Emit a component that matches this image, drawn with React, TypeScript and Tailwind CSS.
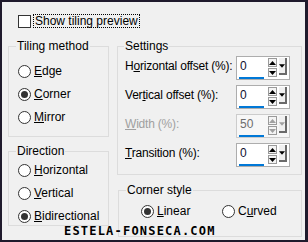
import type { ReactNode } from "react";

function Radio({ checked }: { checked?: boolean }) {
	return (
		<span className="flex h-[13px] w-[13px] shrink-0 items-center justify-center rounded-full border border-[#333333] bg-white">
			{checked && <span className="h-[7px] w-[7px] rounded-full bg-[#333333]" />}
		</span>
	);
}

function Choice({ checked, children }: { checked?: boolean; children: ReactNode }) {
	return (
		<div className="flex h-[23px] items-center gap-[3px]">
			<Radio checked={checked} />
			<span className="whitespace-nowrap">{children}</span>
		</div>
	);
}

function Arrow({ up, disabled }: { up?: boolean; disabled?: boolean }) {
	const c = disabled ? "#a0a0a0" : "#000000";
	return (
		<svg width="7" height="4" viewBox="0 0 7 4">
			{up ? <path d="M0 4 L3.5 0 L7 4 Z" fill={c} /> : <path d="M0 0 L7 0 L3.5 4 Z" fill={c} />}
		</svg>
	);
}

function Spin({ value, disabled }: { value: string; disabled?: boolean }) {
	return (
		<div
			className={`flex h-[24px] w-[54px] shrink-0 border ${
				disabled ? "border-[#cccccc] bg-[#f7f7f7]" : "border-[#adadad] bg-white"
			}`}
		>
			<div className="flex w-[30px] shrink-0 flex-col pl-[2px] pt-[1px]">
				<span className={`h-[17px] pl-[1px] leading-[17px] ${disabled ? "text-[#6d6d6d]" : "text-[#101030]"}`}>
					{value}
				</span>
				<span className="mt-[2px] h-[2px] w-[25px] bg-[#0078d7]" />
			</div>
			<div className="ml-[1px] flex shrink-0 flex-col gap-[1px] pt-[1px]">
				<span className="flex h-[9px] w-[9px] items-center justify-center border border-[#9a9a9a] bg-[#f4f4f4]">
					<Arrow up disabled={disabled} />
				</span>
				<span className="flex h-[9px] w-[9px] items-center justify-center border border-[#9a9a9a] bg-[#f4f4f4]">
					<Arrow disabled={disabled} />
				</span>
			</div>
			<div className="ml-[2px] mt-[1px] flex h-[17px] w-[8px] shrink-0 items-center justify-center border-b-2 border-r-2 border-[#d4d4d4] border-b-[#6a6a6a] border-r-[#6a6a6a] bg-[#f0f0f0]">
				<Arrow disabled={disabled} />
			</div>
		</div>
	);
}

function Row({ label, value, disabled }: { label: ReactNode; value: string; disabled?: boolean }) {
	return (
		<div className="flex h-[29px] items-start">
			<span
				className={`min-w-0 flex-1 whitespace-nowrap pt-[3px] leading-[15px] tracking-[-0.2px] ${
					disabled ? "text-[#a0a0a0]" : ""
				}`}
			>
				{label}
			</span>
			<Spin value={value} disabled={disabled} />
		</div>
	);
}

export default function App() {
	return (
		<div className="h-[242px] w-[308px] bg-[#1f1a2c] pb-[2px] pl-[2px] pr-[3px] pt-[2px]">
			<div className="relative h-full bg-[#f0f0f0] pl-[6px] pt-[12px] font-['Liberation_Sans',Arial,sans-serif] text-[12px] leading-[15px] text-black">
				{/* top checkbox */}
				<div className="flex h-[14px] items-center pl-[10px]">
					<span className="h-[13px] w-[13px] border border-[#333333] bg-white" />
					<span className="ml-[2px] flex h-[14px] items-center whitespace-nowrap border border-dotted border-black px-[1px]">
						Show tiling preview
					</span>
				</div>

				<div className="mt-[11px] flex">
					{/* left column */}
					<div className="flex w-[101px] flex-col">
						<fieldset className="h-[98px] min-w-0 border border-[#dcdcdc] pl-[9px] pt-[6px]">
							<legend className="-ml-[2px] px-[1px] leading-[15px]">Tiling method</legend>
							<Choice>
								<u>E</u>dge
							</Choice>
							<Choice checked>
								<u>C</u>orner
							</Choice>
							<Choice>
								<u>M</u>irror
							</Choice>
						</fieldset>
						<fieldset className="mt-[7px] h-[82px] min-w-0 border border-[#dcdcdc] pl-[9px]">
							<legend className="-ml-[2px] px-[1px] leading-[15px]">Direction</legend>
							<Choice>
								<u>H</u>orizontal
							</Choice>
							<Choice>
								<u>V</u>ertical
							</Choice>
							<Choice checked>
								<u>B</u>idirectional
							</Choice>
						</fieldset>
					</div>

					{/* right column */}
					<div className="ml-[8px] flex w-[185px] flex-col">
						<fieldset className="h-[136px] w-[185px] min-w-0 border border-[#dcdcdc] pl-[7px] pr-[11px] pt-[2px]">
							<legend className="-ml-[1px] px-[1px] leading-[15px]">Settings</legend>
							<Row
								label={
									<>
										H<u>o</u>rizontal offset (%):
									</>
								}
								value="0"
							/>
							<Row
								label={
									<>
										Ver<u>t</u>ical offset (%):
									</>
								}
								value="0"
							/>
							<Row
								label={
									<>
										<u>W</u>idth (%):
									</>
								}
								value="50"
								disabled
							/>
							<Row
								label={
									<>
										<u>T</u>ransition (%):
									</>
								}
								value="0"
							/>
						</fieldset>
						<fieldset className="ml-[1px] mt-[8px] h-[54px] w-[184px] min-w-0 border border-[#dcdcdc] pl-[8px] pt-[3px]">
							<legend className="-ml-[1px] px-[1px] leading-[15px]">Corner style</legend>
							<div className="flex pl-[14px]">
								<div className="flex h-[20px] w-[81px] items-center gap-[3px]">
									<Radio checked />
									<span>
										<u>L</u>inear
									</span>
								</div>
								<div className="flex h-[20px] items-center gap-[3px]">
									<Radio />
									<span>
										C<u>u</u>rved
									</span>
								</div>
							</div>
						</fieldset>
					</div>
				</div>

				{/* watermark */}
				<span className="absolute left-[62px] top-[223px] font-['DejaVu_Sans_Mono',monospace] text-[12px] font-bold leading-[12px] tracking-[1.2px] text-black">
					ESTELA-FONSECA.COM
				</span>
			</div>
		</div>
	);
}
